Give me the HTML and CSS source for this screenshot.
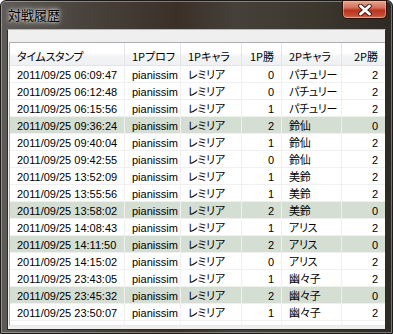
FILE: index.html
```html
<!DOCTYPE html>
<html lang="ja">
<head>
<meta charset="utf-8">
<title>対戦履歴</title>
<link rel="stylesheet" href="styles.css">
</head>
<body>
<div class="window">
  <div class="titlebar">
    <span class="title">対戦履歴</span>
    <div class="close">
      <svg width="20" height="12" viewBox="0 0 20 12">
        <path d="M5.5 2 L14.5 10 M14.5 2 L5.5 10" stroke="#3a1a14" stroke-width="4.6" stroke-linecap="round"/>
        <path d="M5.5 2 L14.5 10 M14.5 2 L5.5 10" stroke="#ffffff" stroke-width="2.8" stroke-linecap="round"/>
      </svg>
    </div>
  </div>
  <div class="client">
    <div class="list">
      <div class="row head">
        <div class="c">タイムスタンプ</div>
        <div class="c">1Pプロフ</div>
        <div class="c">1Pキャラ</div>
        <div class="c r">1P勝</div>
        <div class="c">2Pキャラ</div>
        <div class="c r">2P勝</div>
      </div>
      <div class="row"><div class="c">2011/09/25 06:09:47</div><div class="c">pianissim</div><div class="c j">レミリア</div><div class="c r">0</div><div class="c j">パチュリー</div><div class="c r">2</div></div>
      <div class="row"><div class="c">2011/09/25 06:12:48</div><div class="c">pianissim</div><div class="c j">レミリア</div><div class="c r">0</div><div class="c j">パチュリー</div><div class="c r">2</div></div>
      <div class="row"><div class="c">2011/09/25 06:15:56</div><div class="c">pianissim</div><div class="c j">レミリア</div><div class="c r">1</div><div class="c j">パチュリー</div><div class="c r">2</div></div>
      <div class="row hl"><div class="c">2011/09/25 09:36:24</div><div class="c">pianissim</div><div class="c j">レミリア</div><div class="c r">2</div><div class="c j">鈴仙</div><div class="c r">0</div></div>
      <div class="row"><div class="c">2011/09/25 09:40:04</div><div class="c">pianissim</div><div class="c j">レミリア</div><div class="c r">1</div><div class="c j">鈴仙</div><div class="c r">2</div></div>
      <div class="row"><div class="c">2011/09/25 09:42:55</div><div class="c">pianissim</div><div class="c j">レミリア</div><div class="c r">0</div><div class="c j">鈴仙</div><div class="c r">2</div></div>
      <div class="row"><div class="c">2011/09/25 13:52:09</div><div class="c">pianissim</div><div class="c j">レミリア</div><div class="c r">1</div><div class="c j">美鈴</div><div class="c r">2</div></div>
      <div class="row"><div class="c">2011/09/25 13:55:56</div><div class="c">pianissim</div><div class="c j">レミリア</div><div class="c r">1</div><div class="c j">美鈴</div><div class="c r">2</div></div>
      <div class="row hl"><div class="c">2011/09/25 13:58:02</div><div class="c">pianissim</div><div class="c j">レミリア</div><div class="c r">2</div><div class="c j">美鈴</div><div class="c r">0</div></div>
      <div class="row"><div class="c">2011/09/25 14:08:43</div><div class="c">pianissim</div><div class="c j">レミリア</div><div class="c r">1</div><div class="c j">アリス</div><div class="c r">2</div></div>
      <div class="row hl"><div class="c">2011/09/25 14:11:50</div><div class="c">pianissim</div><div class="c j">レミリア</div><div class="c r">2</div><div class="c j">アリス</div><div class="c r">0</div></div>
      <div class="row"><div class="c">2011/09/25 14:15:02</div><div class="c">pianissim</div><div class="c j">レミリア</div><div class="c r">0</div><div class="c j">アリス</div><div class="c r">2</div></div>
      <div class="row"><div class="c">2011/09/25 23:43:05</div><div class="c">pianissim</div><div class="c j">レミリア</div><div class="c r">1</div><div class="c j">幽々子</div><div class="c r">2</div></div>
      <div class="row hl"><div class="c">2011/09/25 23:45:32</div><div class="c">pianissim</div><div class="c j">レミリア</div><div class="c r">2</div><div class="c j">幽々子</div><div class="c r">0</div></div>
      <div class="row"><div class="c">2011/09/25 23:50:07</div><div class="c">pianissim</div><div class="c j">レミリア</div><div class="c r">1</div><div class="c j">幽々子</div><div class="c r">2</div></div>
      <div class="row tail"><div class="c"></div><div class="c"></div><div class="c"></div><div class="c"></div><div class="c"></div><div class="c"></div></div>
    </div>
  </div>
</div>
</body>
</html>
```
FILE: styles.css
```css
html, body {
  margin: 0;
  padding: 0;
  background: #ffffff;
}
body {
  width: 393px;
  height: 334px;
  overflow: hidden;
  font-family: "Liberation Sans", "Noto Sans CJK JP", sans-serif;
  font-size: 11px;
  color: #000;
}
.window {
  box-sizing: border-box;
  width: 393px;
  height: 334px;
  border: 1px solid #1a1a1a;
  border-radius: 6px 6px 0 0;
  background: linear-gradient(90deg, #5e5a55 0%, #4a443e 20%, #3a3028 45%, #46403a 60%, #3c382e 80%, #2e2a24 100%);
  box-shadow: inset 0 0 0 1px rgba(255,255,255,0.35);
  display: flex;
  flex-direction: column;
  padding: 0 6px 7px 6px;
}
.titlebar {
  height: 28px;
  flex: none;
  display: flex;
  align-items: flex-start;
  justify-content: space-between;
}
.title {
  margin-top: 4px;
  margin-left: 1px;
  font-family: "Noto Sans CJK JP", sans-serif;
  font-size: 13px;
  color: #000;
  text-shadow: 0 0 6px rgba(255,255,255,0.9), 0 0 3px rgba(255,255,255,0.9);
}
.close {
  width: 45px;
  height: 18px;
  margin-right: -1px;
  box-sizing: border-box;
  border: 1px solid #3a0e08;
  border-top: none;
  border-radius: 0 0 5px 5px;
  background: linear-gradient(180deg, #e5a690 0%, #d0705a 40%, #b8341e 55%, #c84a30 85%, #e07050 100%);
  box-shadow: inset 0 0 0 1px rgba(255,200,180,0.5);
  display: flex;
  align-items: center;
  justify-content: center;
}
.close svg { display: block; }
.client {
  flex: 1;
  background: #efefef;
  border: 1px solid #2a2a2a;
  border-top-color: #b8b8b8;
  padding: 12px 0 3px 1px;
  display: flex;
  flex-direction: column;
}
.list {
  flex: 1;
  background: #fff;
  border: 1px solid #a9adb4;
  border-right: none;
  border-bottom: 1px solid #e6e6e6;
  overflow: hidden;
}
.row {
  display: grid;
  grid-template-columns: 115px 56px 61px 40px 60px 44px;
  height: 17px;
}
.row .c {
  box-sizing: border-box;
  border-right: 1px solid #f0f0f0;
  border-bottom: 1px solid #f0f0f0;
  padding: 1px 6px 0 7px;
  line-height: 16px;
  white-space: nowrap;
  overflow: hidden;
}
.row .c.j {
  font-family: "Noto Sans CJK JP", sans-serif;
  font-size: 11px;
  font-feature-settings: "palt";
  letter-spacing: -0.3px;
  padding-top: 0;
}
.row .c.r { text-align: right; padding-right: 7px; }
.row.hl .c { background: #d4ded3; }
.row.head {
  height: 23px;
  background: linear-gradient(180deg, #ffffff 0%, #ffffff 45%, #f3f4f6 60%, #eef0f2 100%);
  border-bottom: 1px solid #e2e4e8;
  box-sizing: border-box;
}
.row.head .c {
  border-right: 1px solid #e3e5e8;
  border-bottom: none;
  line-height: 22px;
  font-family: "Noto Sans CJK JP", sans-serif;
  font-feature-settings: "palt";
  font-size: 11px;
  padding-top: 2px;
}
.row.head .c:first-child { letter-spacing: -0.3px; }
.row.tail { height: 4px; }
.row.tail .c { border-bottom: none; }
```
